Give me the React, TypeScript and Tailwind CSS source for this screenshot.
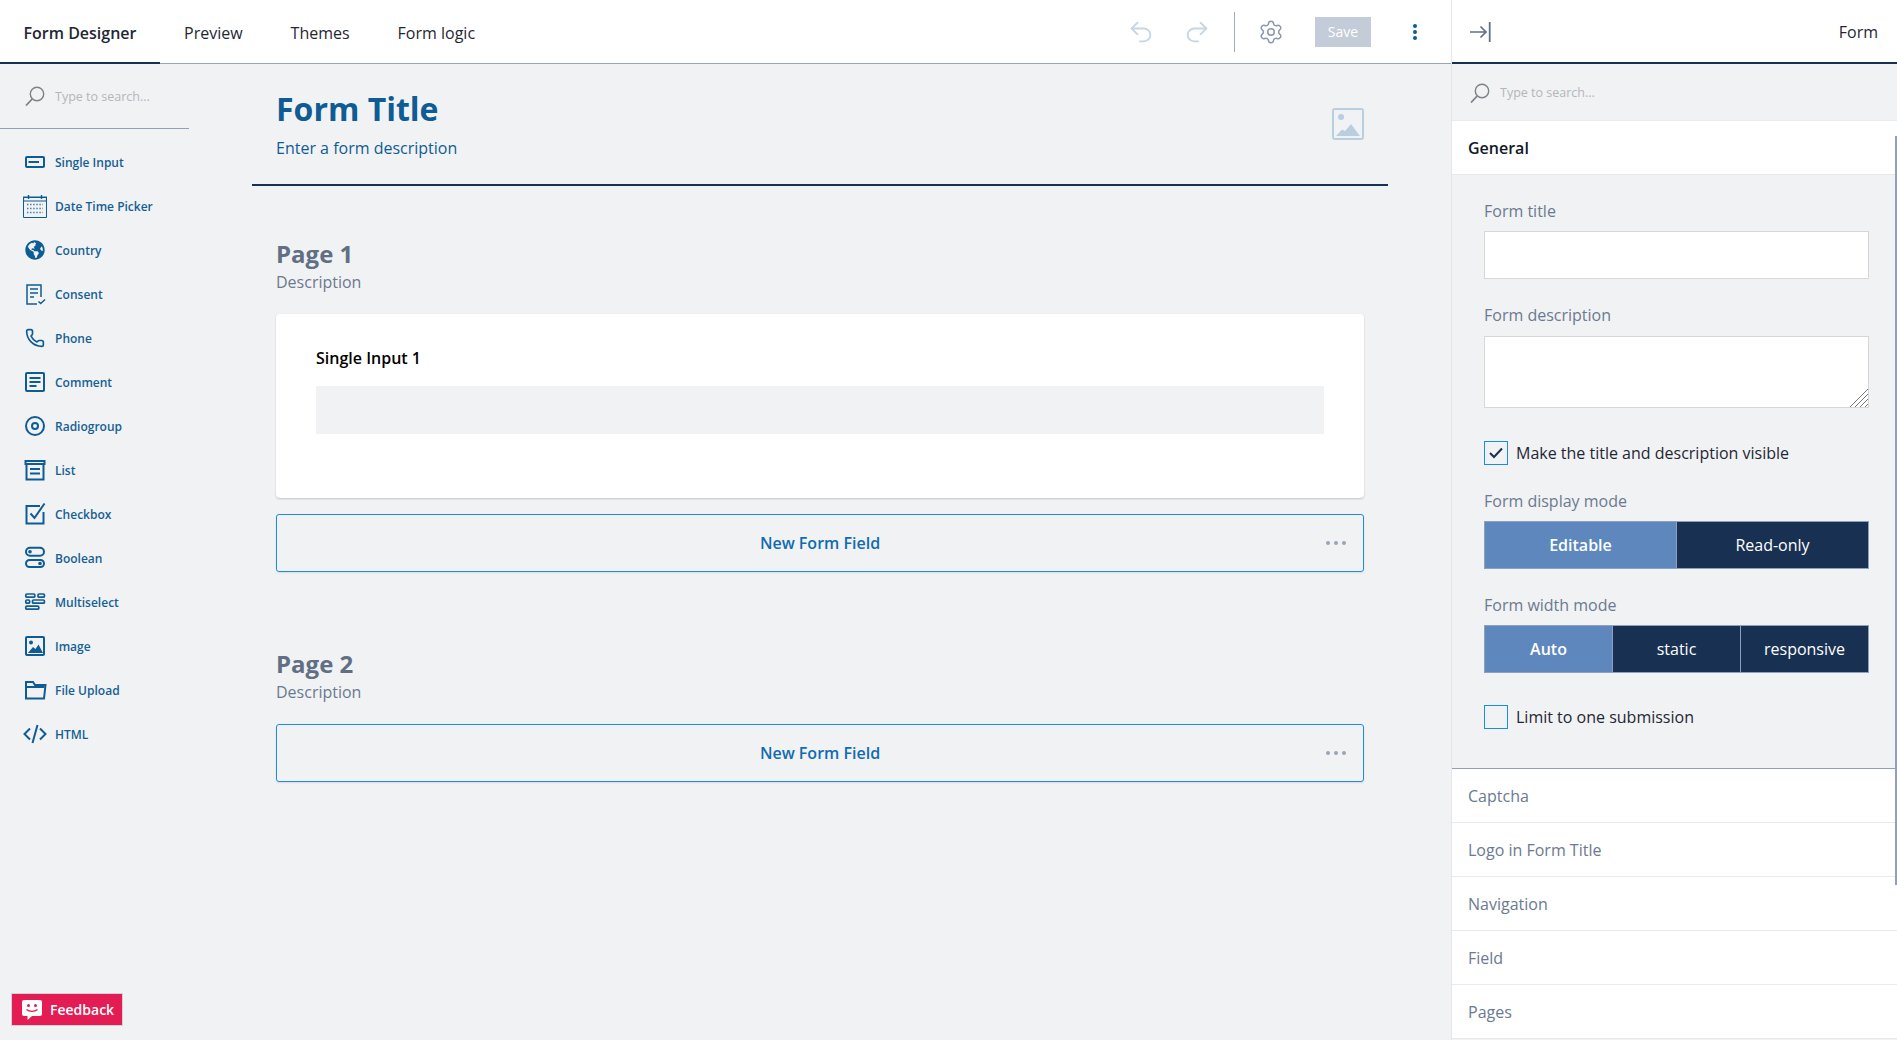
import { Phone, Settings, Undo2, Redo2 } from "lucide-react";
import { FaGlobeAmericas } from "react-icons/fa";

const blue = "#0f5c94";

function IconBox({ children }: { children: React.ReactNode }) {
  return (
    <svg width="24" height="24" viewBox="0 0 24 24" fill="none" stroke={blue} strokeWidth="2" className="shrink-0">
      {children}
    </svg>
  );
}

function SearchIcon() {
  return (
    <svg width="20" height="20" viewBox="0 0 20 20" fill="none" stroke="#7d8288" className="shrink-0">
      <circle cx="12" cy="8" r="6.7" strokeWidth="1.4" />
      <path d="M7.2 13 1 19.500" strokeWidth="1.8" />
    </svg>
  );
}

const tools: { label: string; icon: React.ReactNode }[] = [
  {
    label: "Single Input",
    icon: (
      <IconBox>
        <rect x="3" y="7" width="18" height="10" rx="1" />
        <path d="M5.500 12H16" />
      </IconBox>
    ),
  },
  {
    label: "Date Time Picker",
    icon: (
      <IconBox>
        <path d="M.5 3.500h23v20H.5z" strokeWidth="1" />
        <path d="M.5 3h23v4H.5z" strokeWidth="1.2" />
        <path d="M5.500 1v4M18.500 1v4" strokeWidth="1.4" />
        <path d="M4 10.500h16M4 14.500h16M4 18.500h16" strokeWidth="1.6" strokeDasharray="1.4 1.7" opacity=".8" />
      </IconBox>
    ),
  },
  {
    label: "Country",
    icon: (
      <span className="flex h-6 w-6 shrink-0 items-center justify-center text-[#0f5c94]">
        <FaGlobeAmericas size={20} />
      </span>
    ),
  },
  {
    label: "Consent",
    icon: (
      <IconBox>
        <path d="M18 15V3H4v19h10" strokeWidth="1.5" />
        <path d="M7 7h8M7 11h8M7 15h4" strokeWidth="1.5" />
        <path d="m15.500 19.500 2.200 2 4.300-4" strokeWidth="1.5" />
      </IconBox>
    ),
  },
  {
    label: "Phone",
    icon: (
      <span className="flex h-6 w-6 shrink-0 items-center justify-center text-[#0f5c94]">
        <Phone size={20} strokeWidth={2} />
      </span>
    ),
  },
  {
    label: "Comment",
    icon: (
      <IconBox>
        <rect x="3" y="3" width="18" height="18" rx="1" />
        <path d="M6.500 8h11M6.500 12h11M6.500 16h7" />
      </IconBox>
    ),
  },
  {
    label: "Radiogroup",
    icon: (
      <IconBox>
        <circle cx="12" cy="12" r="9" />
        <circle cx="12" cy="12" r="3" />
      </IconBox>
    ),
  },
  {
    label: "List",
    icon: (
      <IconBox>
        <path d="M2.500 3h19v3h-19z" />
        <path d="M3.500 6v15.500h17V6" />
        <path d="M7 11h10M7 15.500h10" />
      </IconBox>
    ),
  },
  {
    label: "Checkbox",
    icon: (
      <IconBox>
        <path d="M17 4H3.500v17.500h17V10" />
        <path d="m7.500 11.500 4 4.500L21.500 1.500" />
      </IconBox>
    ),
  },
  {
    label: "Boolean",
    icon: (
      <IconBox>
        <rect x="3" y="1.800" width="18" height="8" rx="4" />
        <rect x="3" y="14" width="18" height="7" rx="3.500" />
        <circle cx="7" cy="5.800" r="1.800" fill={blue} stroke="none" />
        <circle cx="17" cy="17.500" r="1.800" fill={blue} stroke="none" />
      </IconBox>
    ),
  },
  {
    label: "Multiselect",
    icon: (
      <IconBox>
        <g strokeWidth="1.700">
          <rect x="2.800" y="4" width="9" height="3.200" rx="1" />
          <rect x="15" y="4" width="6.400" height="3.200" rx="1" />
          <rect x="2.800" y="10" width="3.800" height="3.200" rx="1" />
          <rect x="9.500" y="10" width="11.900" height="3.200" rx="1" />
          <rect x="2.800" y="16.200" width="13" height="3" rx="1" />
        </g>
      </IconBox>
    ),
  },
  {
    label: "Image",
    icon: (
      <IconBox>
        <rect x="3" y="3" width="18" height="18" rx="1" />
        <circle cx="8" cy="8.500" r="2" fill={blue} stroke="none" />
        <path d="m5 19 5-6 2.500 2 3-4.500L20 19z" fill={blue} stroke="none" />
      </IconBox>
    ),
  },
  {
    label: "File Upload",
    icon: (
      <IconBox>
        <path d="M3 20.500V4h7l2 3h10.500L21 20.500z" />
        <path d="M3 9h18.500" />
      </IconBox>
    ),
  },
  {
    label: "HTML",
    icon: (
      <IconBox>
        <path d="m7 6.500-5.500 5.500L7 17.500M17 6.500l5.500 5.500-5.500 5.500M14.500 3l-5 18" />
      </IconBox>
    ),
  },
];

function NewFormField() {
  return (
    <div className="relative flex h-[58px] items-center justify-center rounded-[3px] border-[1.5px] border-[#1c8ceb] shadow-[0_1px_2px_rgba(0,0,0,0.1)]">
      <span className="text-base font-semibold text-[#0f6cb0]">New Form Field</span>
      <span className="absolute right-[17px] top-1/2 flex -translate-y-1/2 gap-1">
        <i className="h-1 w-1 rounded-full bg-[#9aa5b8]" />
        <i className="h-1 w-1 rounded-full bg-[#9aa5b8]" />
        <i className="h-1 w-1 rounded-full bg-[#9aa5b8]" />
      </span>
    </div>
  );
}

function PageTitle({ title }: { title: string }) {
  return (
    <div>
      <h2 className="mb-px text-2xl leading-[30px] font-bold text-[#616f84]">{title}</h2>
      <p className="text-base leading-6 text-[#6b7a90]">Description</p>
    </div>
  );
}

function Segmented({ options }: { options: string[] }) {
  return (
    <div className="mt-2 flex h-12 border border-[#8ea0bb]">
      {options.map((o, i) => (
        <button
          key={o}
          type="button"
          className={
            i === 0
              ? "flex-1 bg-[#5d87bd] text-base font-semibold text-white"
              : "flex-1 border-l border-[#8ea0bb] bg-[#183153] text-base text-white"
          }
        >
          {o}
        </button>
      ))}
    </div>
  );
}

function Check({ checked, label, className }: { checked?: boolean; label: string; className: string }) {
  return (
    <label className={`flex items-center gap-2 ${className}`}>
      <span className="flex h-6 w-6 items-center justify-center border border-[#1c8ceb]">
        {checked && (
          <svg width="16" height="14" viewBox="0 0 16 14" fill="none" stroke="#183153" strokeWidth="2">
            <path d="m2 7 4 4 8-8.500" />
          </svg>
        )}
      </span>
      <span className="text-base leading-6 text-[#1f2733]">{label}</span>
    </label>
  );
}

export default function App() {
  return (
    <div className="flex h-screen w-full overflow-hidden bg-[#f1f2f4] font-['Open_Sans',sans-serif]">
      <div className="relative flex min-w-0 flex-1 flex-col">
        <div className="flex h-16 shrink-0 items-stretch border-b border-[#9aa5b8] bg-white text-base text-[#1f2733]">
          <div className="-mb-px flex w-40 items-center justify-center border-b-2 border-[#183153] pt-[3px] font-semibold">
            Form Designer
          </div>
          <div className="flex items-center px-6 pt-[3px]">Preview</div>
          <div className="flex items-center px-6 pt-[3px]">Themes</div>
          <div className="flex items-center px-6 pt-[3px]">Form logic</div>
          <div className="ml-auto flex items-center pt-px pr-[34px]">
            <Undo2 size={28} strokeWidth={1.6} className="text-[#c5d6e6]" />
            <Redo2 size={28} strokeWidth={1.6} className="ml-[28px] text-[#c5d6e6]" />
            <span className="ml-[23px] h-10 w-px bg-[#9fb0c6]" />
            <Settings size={26} strokeWidth={1.4} className="ml-[23px] text-[#8a97ad]" />
            <button type="button" className="ml-[31px] h-[30px] w-14 bg-[#c3ccd8] text-sm text-white">
              Save
            </button>
            <span className="ml-[42px] flex flex-col gap-[2px]">
              <i className="h-1 w-1 rounded-full bg-[#0f5c94]" />
              <i className="h-1 w-1 rounded-full bg-[#0f5c94]" />
              <i className="h-1 w-1 rounded-full bg-[#0f5c94]" />
            </span>
          </div>
        </div>

        <div className="flex min-h-0 flex-1">
          <aside className="w-[189px] shrink-0">
            <div className="flex h-[65px] items-center gap-[10px] border-b border-[#8ea0bb] pl-[25px]">
              <SearchIcon />
              <input
                placeholder="Type to search..."
                className="w-28 bg-transparent pt-[2px] text-[12.5px] outline-none placeholder:text-[#b4b6b9]"
              />
            </div>
            <ul className="pt-[11px]">
              {tools.map((t) => (
                <li key={t.label} className="flex h-11 items-center gap-2 pl-[23px]">
                  {t.icon}
                  <span className="pt-px text-xs font-semibold text-[#155f94]">{t.label}</span>
                </li>
              ))}
            </ul>
          </aside>

          <main className="min-w-0 flex-1 px-[63px]">
            <div className="flex items-start justify-between border-b-2 border-[#183153] px-6 pt-[23px] pb-6">
              <div>
                <h1 className="text-[32px] leading-[44px] font-bold text-[#0f5c94]">Form Title</h1>
                <p className="mt-[5px] text-base leading-6 text-[#0f5c94]">Enter a form description</p>
              </div>
              <svg width="32" height="32" viewBox="0 0 32 32" className="mt-[21px]" fill="none">
                <rect x="1" y="1" width="30" height="30" rx="2" stroke="#b9cfe0" strokeWidth="2" />
                <circle cx="9" cy="9" r="3" fill="#b9cfe0" />
                <path d="m4 28 6-6.500 3 1.500 6-7 9 12z" fill="#b9cfe0" />
              </svg>
            </div>

            <div className="px-6">
              <div className="mt-[53px]">
                <PageTitle title="Page 1" />
                <div className="mt-5 rounded-[4px] bg-white px-10 pt-8 pb-16 shadow-[0_1px_2px_rgba(0,0,0,0.2)]">
                  <div className="text-base leading-6 font-semibold text-black">Single Input 1</div>
                  <div className="mt-4 h-12 bg-[#f1f2f4]" />
                </div>
                <div className="mt-4">
                  <NewFormField />
                </div>
              </div>

              <div className="mt-[77px]">
                <PageTitle title="Page 2" />
                <div className="mt-5">
                  <NewFormField />
                </div>
              </div>
            </div>
          </main>
        </div>

        <button
          type="button"
          className="absolute bottom-[14px] left-[11px] flex h-[33px] w-[112px] items-center gap-2 border border-[#cfd2d8] bg-[#e31c54] pl-[10px] text-sm font-semibold text-white"
        >
          <svg width="20" height="20" viewBox="0 0 20 20">
            <path d="M2 0h16a2 2 0 0 1 2 2v12a2 2 0 0 1-2 2H10l-4.500 4V16H2a2 2 0 0 1-2-2V2a2 2 0 0 1 2-2z" fill="#fff" />
            <circle cx="6.500" cy="5.500" r="1.500" fill="#e31c54" />
            <circle cx="13.500" cy="5.500" r="1.500" fill="#e31c54" />
            <path d="M4.500 9.500c3 2.500 8 2.500 11 0" fill="none" stroke="#e31c54" strokeWidth="1.400" />
          </svg>
          Feedback
        </button>
      </div>

      <aside className="relative flex w-[446px] shrink-0 flex-col border-l border-[#e4e6e9]">
        <div className="flex h-16 shrink-0 items-center justify-between border-b-2 border-[#183153] bg-white pt-[2px] pr-[19px] pl-[18px]">
          <svg width="21" height="20" viewBox="0 0 21 20" fill="none" stroke="#5f7088">
            <path d="M0 10h16M10.500 4.500 16 10l-5.500 5.500" strokeWidth="1.700" />
            <path d="M19.700 0v20" strokeWidth="1.800" />
          </svg>
          <span className="text-base text-[#1f2733]">Form</span>
        </div>
        <div className="flex h-14 shrink-0 items-center gap-[10px] pt-[2px] pl-[18px]">
          <SearchIcon />
          <input
            placeholder="Type to search..."
            className="w-28 bg-transparent text-[12.5px] outline-none placeholder:text-[#b4b6b9]"
          />
        </div>
        <div className="flex h-[55px] shrink-0 items-center border-y border-[#e8e9eb] bg-white pl-4 text-base font-semibold text-[#111827]">
          General
        </div>

        <div className="shrink-0 border-b border-[#8ea0bb] pt-6 pr-[28px] pb-[39px] pl-8">
          <label className="block text-base leading-6 text-[#6b7a90]">Form title</label>
          <input className="mt-2 block h-12 w-full border border-[#d6d7d9] bg-white outline-none" />
          <label className="mt-6 block text-base leading-6 text-[#6b7a90]">Form description</label>
          <div className="relative mt-[9px]">
            <textarea className="block h-[72px] w-full resize-none border border-[#d6d7d9] bg-white outline-none" />
            <svg width="18" height="18" viewBox="0 0 18 18" stroke="#777" className="absolute right-px bottom-px">
              <path d="M0 18 18 0M5 18 18 5M10 18l8-8M15 18l3-3" strokeWidth="1" />
            </svg>
          </div>
          <Check checked label="Make the title and description visible" className="mt-[33px]" />
          <div className="mt-6 text-base leading-6 text-[#6b7a90]">Form display mode</div>
          <Segmented options={["Editable", "Read-only"]} />
          <div className="mt-6 text-base leading-6 text-[#6b7a90]">Form width mode</div>
          <Segmented options={["Auto", "static", "responsive"]} />
          <Check label="Limit to one submission" className="mt-8" />
        </div>

        {["Captcha", "Logo in Form Title", "Navigation", "Field", "Pages"].map((s) => (
          <div
            key={s}
            className="flex h-[54px] shrink-0 items-center border-b border-[#e8e9eb] bg-white pl-4 text-base text-[#6b7a90]"
          >
            {s}
          </div>
        ))}

        <span className="absolute top-[136px] right-0 h-[749px] w-[2px] bg-[#8ea0bb]" />
      </aside>
    </div>
  );
}
